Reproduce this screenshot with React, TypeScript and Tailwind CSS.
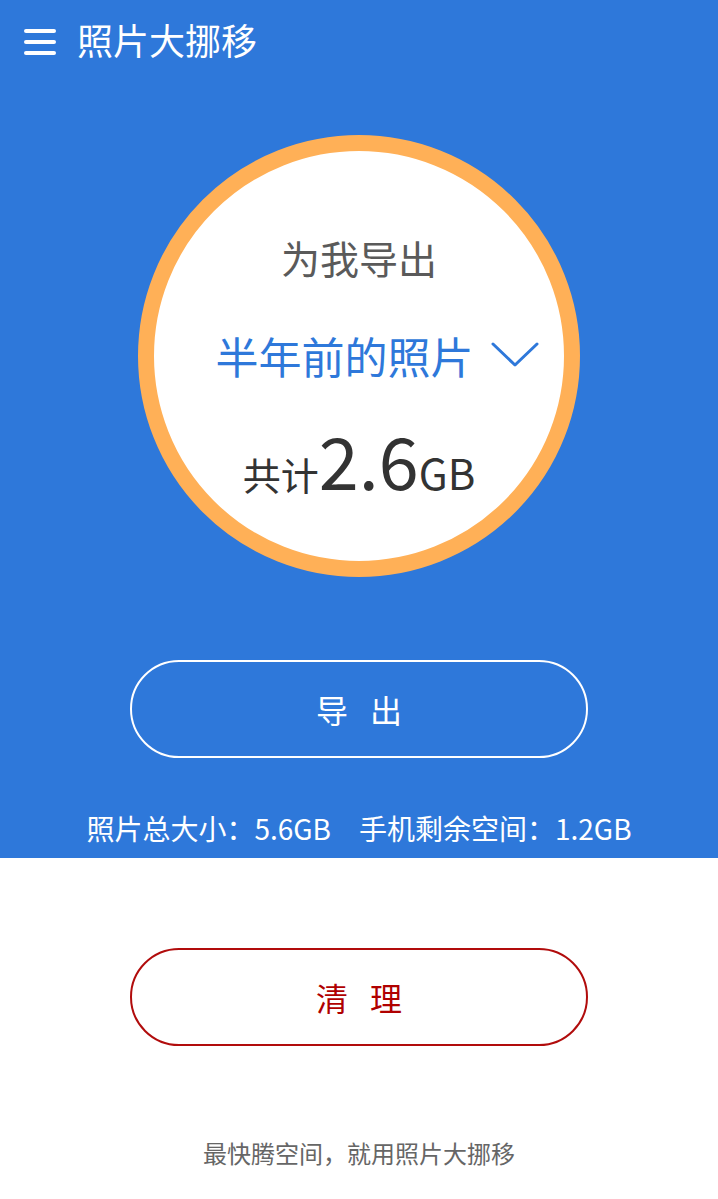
import React from "react";

const font = { fontFamily: '"Noto Sans CJK SC", "Noto Sans", sans-serif' };

function Chevron() {
  return (
    <svg width="48" height="26" viewBox="0 0 48 26" fill="none" className="ml-[17px]">
      <path d="M2 2 L24 23 L46 2" stroke="#2E78DA" strokeWidth="3" strokeLinecap="round" strokeLinejoin="round" />
    </svg>
  );
}

export default function App() {
  return (
    <div className="w-[718px] h-[1199px] bg-white flex flex-col" style={font}>
      {/* blue top part */}
      <div className="bg-[#2E78DA] flex flex-col items-center h-[858px]">
        <div className="w-full h-[84px] flex items-center px-[24px]">
          <div className="flex flex-col gap-[7px] w-[32px]">
            <span className="h-[4px] rounded-full bg-white" />
            <span className="h-[4px] rounded-full bg-white" />
            <span className="h-[4px] rounded-full bg-white" />
          </div>
          <h1 className="ml-[21px] pb-[6px] text-[36px] text-white leading-none">照片大挪移</h1>
        </div>

        <div className="mt-[51px] w-[442px] h-[442px] rounded-full border-[16px] border-[#FFB057] bg-white flex flex-col items-center">
          <p className="mt-[80px] text-[39px] leading-[52px] text-[#5a5a5a]">为我导出</p>
          <div className="mt-[44px] ml-[36px] flex items-center">
            <span className="text-[43px] leading-[56px] text-[#2E78DA]">半年前的照片</span>
            <Chevron />
          </div>
          <div className="mt-[31px] flex items-baseline text-[#333333]">
            <span className="text-[38px] leading-[90px]">共计</span>
            <span className="text-[72px] leading-[90px]">2.6</span>
            <span className="text-[42px] leading-[90px]">GB</span>
          </div>
        </div>

        <button className="mt-[83px] w-[458px] h-[98px] rounded-full border-2 border-white text-white text-[32px] tracking-[22px] pl-[22px]">
          导出
        </button>

        <div className="mt-[52px] flex gap-[28px] text-white text-[28px] leading-[36px]">
          <span>照片总大小：5.6GB</span>
          <span>手机剩余空间：1.2GB</span>
        </div>
      </div>

      {/* white lower part */}
      <div className="flex flex-col items-center">
        <button className="mt-[90px] w-[458px] h-[98px] rounded-full border-2 border-[#B10C0C] text-[#B00000] text-[32px] tracking-[22px] pl-[22px]">
          清理
        </button>
        <p className="mt-[90px] text-[24px] leading-[34px] text-[#666666]">最快腾空间，就用照片大挪移</p>
      </div>
    </div>
  );
}
